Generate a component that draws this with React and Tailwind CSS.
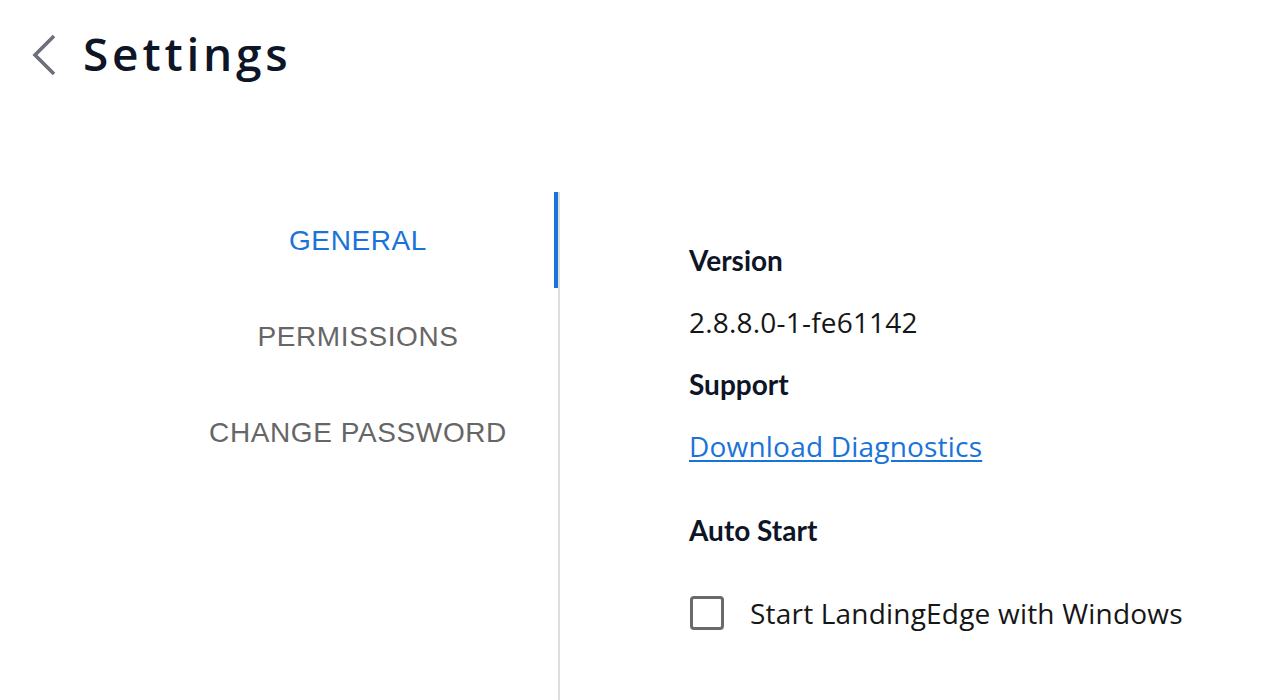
const navItems = [
  { label: 'GENERAL', active: true },
  { label: 'PERMISSIONS', active: false },
  { label: 'CHANGE PASSWORD', active: false },
];

export default function App() {
  return (
    <div className="flex h-[700px] w-full flex-col overflow-hidden bg-white">
      <header className="flex h-[110px] items-start pl-[31px] pt-[25px]">
        <button type="button" className="mr-[26px] mt-[9px] text-[#6b7079]">
          <svg width="26" height="42" viewBox="0 0 26 42" fill="none">
            <path d="M23 2 L4 21 L23 40" stroke="currentColor" strokeWidth="3.6" strokeLinecap="butt" strokeLinejoin="miter" />
          </svg>
        </button>
        <h1 className="font-['Open_Sans',sans-serif] text-[46px] font-semibold leading-[56px] tracking-[3.8px] text-[#0d1526]">
          Settings
        </h1>
      </header>

      <main className="mt-[82px] flex flex-1">
        <nav className="w-[560px] border-r-2 border-[#dedede]">
          {navItems.map((item) => (
            <button
              key={item.label}
              type="button"
              className={`flex h-[96px] w-full items-center justify-center border-r-4 pl-[162px] pt-[2px] font-['Liberation_Sans',Arial,sans-serif] text-[28px] tracking-[0.6px] ${
                item.active ? 'border-[#1a73d9] text-[#1a73d9]' : 'border-transparent text-[#666666]'
              }`}
            >
              {item.label}
            </button>
          ))}
        </nav>

        <section className="flex-1 pl-[129px] pt-[50px] font-['Open_Sans',sans-serif] text-[28px] leading-[36px] tracking-[0.2px] text-[#161616]">
          <h2 className="font-['Lato',sans-serif] font-bold tracking-normal text-[#0d1526]">Version</h2>
          <p className="mt-[26px]">2.8.8.0-1-fe61142</p>
          <h2 className="mt-[26px] font-['Lato',sans-serif] font-bold tracking-normal text-[#0d1526]">Support</h2>
          <a href="#" className="mt-[26px] block text-[#1a73d9] underline underline-offset-[3px]">
            Download Diagnostics
          </a>
          <h2 className="mt-[48px] font-['Lato',sans-serif] font-bold tracking-normal text-[#0d1526]">Auto Start</h2>
          <label className="mt-[47px] flex items-center gap-[26px]">
            <span className="ml-px h-[34px] w-[34px] shrink-0 rounded-[4px] border-[3px] border-[#6a6a6a]" />
            Start LandingEdge with Windows
          </label>
        </section>
      </main>
    </div>
  );
}
